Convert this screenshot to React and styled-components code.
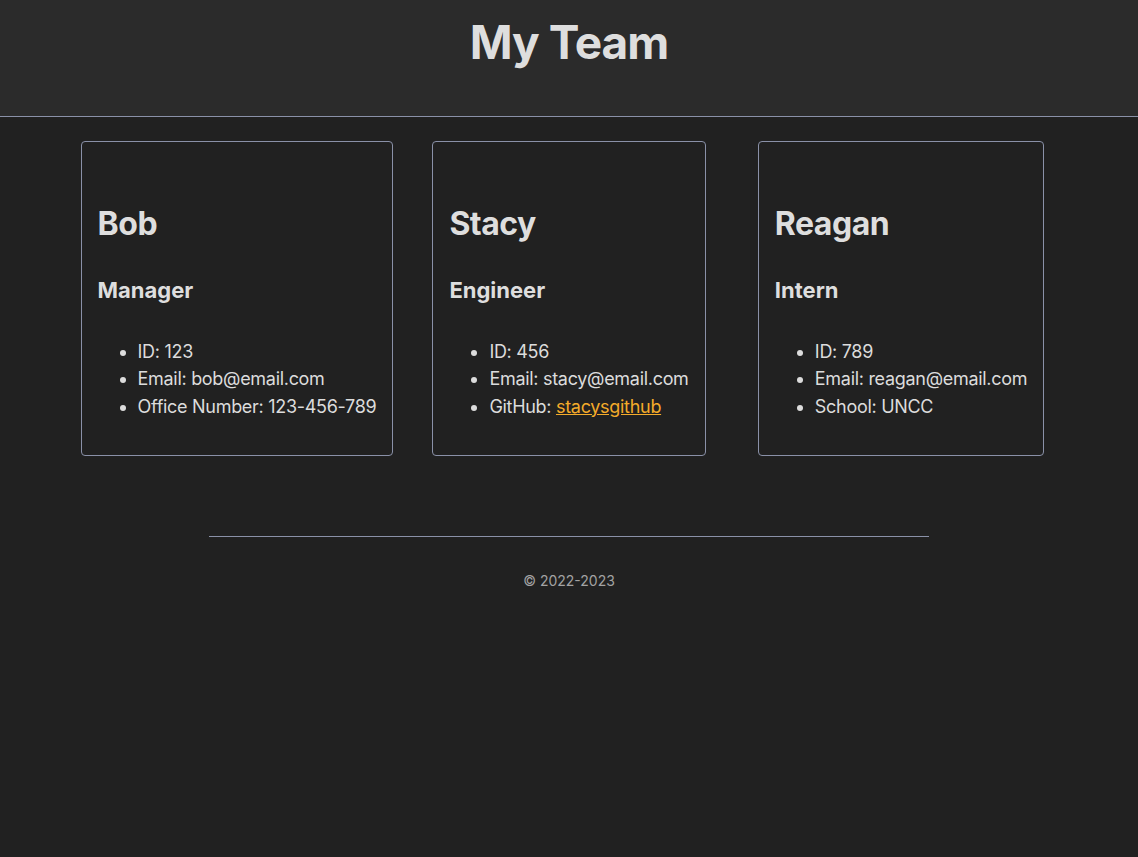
import React from "react";
import styled, { createGlobalStyle } from "styled-components";

const GlobalStyle = createGlobalStyle`
	html, body {
		margin: 0;
		padding: 0;
		background: #212121;
		color: #dcdcdc;
		font-family: Inter, "Noto Sans", sans-serif;
	}
	#root {
		min-height: 100vh;
		background: #212121;
	}
`;

const Header = styled.header`
	background: #2b2b2b;
	border-bottom: 1px solid #8a91a8;
	height: 117px;
	box-sizing: border-box;
	padding-top: 15px;
	text-align: center;
`;

const Title = styled.h1`
	margin: 0;
	font-size: 46px;
	line-height: 1.2;
	font-weight: 700;
	letter-spacing: -1px;
	color: #dedede;
`;

const Main = styled.main`
	width: 996px;
	margin: 24px auto 0;
	display: grid;
	grid-template-columns: repeat(3, 1fr);
	justify-items: center;
	align-items: start;
`;

const Card = styled.section`
	border: 1px solid #8a91a8;
	border-radius: 4px;
	padding: 0 16px;
	height: 315px;
	box-sizing: border-box;
`;

const Name = styled.h2`
	margin: 63px 0 0;
	font-size: 32px;
	line-height: 1.2;
	font-weight: 700;
	letter-spacing: -0.5px;
	color: #dedede;
`;

const Role = styled.h3`
	margin: 34px 0 0;
	font-size: 22px;
	line-height: 1.2;
	font-weight: 700;
	color: #dedede;
`;

const Details = styled.ul`
	margin: 34px 0 0;
	padding-left: 40px;
	font-size: 18px;
	line-height: 27.5px;
	letter-spacing: -0.3px;
	white-space: nowrap;
`;

const Link = styled.a`
	color: #f4ab2a;
	text-decoration: underline;
`;

const Footer = styled.footer`
	width: 720px;
	margin: 80px auto 0;
	border-top: 1px solid #8a91a8;
	padding-top: 35px;
	text-align: center;
	font-size: 14px;
	color: #a3a3a3;
`;

const team = [
	{
		name: "Bob",
		role: "Manager",
		id: 123,
		email: "bob@email.com",
		extra: ["Office Number", "123-456-789"],
	},
	{
		name: "Stacy",
		role: "Engineer",
		id: 456,
		email: "stacy@email.com",
		extra: ["GitHub", "stacysgithub"],
		link: true,
	},
	{
		name: "Reagan",
		role: "Intern",
		id: 789,
		email: "reagan@email.com",
		extra: ["School", "UNCC"],
	},
];

const App = () => {
	return (
		<>
			<GlobalStyle />
			<Header>
				<Title>My Team</Title>
			</Header>
			<Main>
				{team.map((member) => (
					<Card key={member.id}>
						<Name>{member.name}</Name>
						<Role>{member.role}</Role>
						<Details>
							<li>ID: {member.id}</li>
							<li>Email: {member.email}</li>
							<li>
								{member.extra[0]}:{" "}
								{member.link ? (
									<Link href="#">{member.extra[1]}</Link>
								) : (
									member.extra[1]
								)}
							</li>
						</Details>
					</Card>
				))}
			</Main>
			<Footer>© 2022-2023</Footer>
		</>
	);
};

export default App;
